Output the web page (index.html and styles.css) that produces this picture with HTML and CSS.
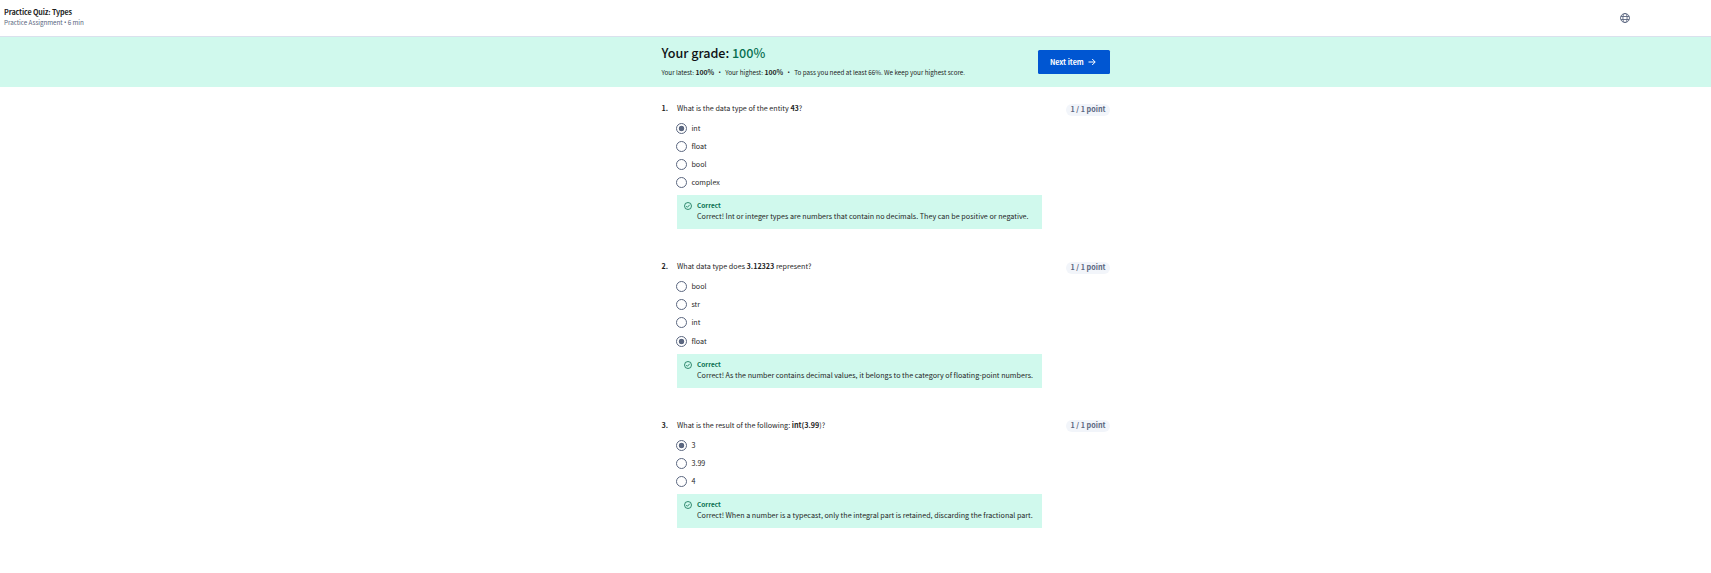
FILE: index.html
```html
<!DOCTYPE html>
<html lang="en">
<head>
<meta charset="utf-8">
<title>Practice Quiz: Types</title>
<link rel="stylesheet" href="styles.css">
</head>
<body>
<svg class="defs" aria-hidden="true">
  <symbol id="check" viewBox="0 0 8 8"><g fill="none" stroke="currentColor" stroke-width=".8"><circle cx="4" cy="4" r="3.5"/><path d="M2.2 4.1l1.2 1.2 2.3-2.5"/></g></symbol>
</svg>
<header class="topbar">
  <div>
    <h1 class="title">Practice Quiz: Types</h1>
    <p class="subtitle">Practice Assignment <span class="bullet">•</span> 6 min</p>
  </div>
  <svg class="globe" viewBox="0 0 10 10" fill="none" stroke="currentColor" stroke-width=".9"><circle cx="5" cy="5" r="4.5"/><ellipse cx="5" cy="5" rx="2.1" ry="4.5"/><path d="M.9 3.5h8.2M.9 6.5h8.2"/></svg>
</header>
<section class="banner">
  <div class="banner-inner">
    <div>
      <h2 class="grade">Your grade: <span class="score">100%</span></h2>
      <p class="summary">Your latest: <b>100%</b><span class="bullet dot">•</span>Your highest: <b>100%</b><span class="bullet dot">•</span>To pass you need at least 66%. We keep your highest score.</p>
    </div>
    <button class="next"><span>Next item</span><svg class="arrow" viewBox="0 0 8 8" fill="none" stroke="currentColor" stroke-width="1"><path d="M.5 4h6.6M4.2 1l3 3-3 3"/></svg></button>
  </div>
</section>
<main class="quiz">
  <section class="question">
    <span class="num">1.</span>
    <div class="body">
      <p class="prompt">What is the data type of the entity <b>43</b>?</p>
      <ul class="options">
        <li class="option"><span class="radio on"></span>int</li>
        <li class="option"><span class="radio"></span>float</li>
        <li class="option"><span class="radio"></span>bool</li>
        <li class="option"><span class="radio"></span>complex</li>
      </ul>
      <div class="feedback"><svg class="check"><use href="#check"/></svg><div><p class="verdict">Correct</p><p class="note">Correct! Int or integer types are numbers that contain no decimals. They can be positive or negative.</p></div></div>
    </div>
    <span class="points">1 / 1 point</span>
  </section>
  <section class="question second">
    <span class="num">2.</span>
    <div class="body">
      <p class="prompt">What data type does <b>3.12323</b> represent?</p>
      <ul class="options">
        <li class="option"><span class="radio"></span>bool</li>
        <li class="option"><span class="radio"></span>str</li>
        <li class="option"><span class="radio"></span>int</li>
        <li class="option last"><span class="radio on"></span>float</li>
      </ul>
      <div class="feedback"><svg class="check"><use href="#check"/></svg><div><p class="verdict">Correct</p><p class="note">Correct! As the number contains decimal values, it belongs to the category of floating-point numbers.</p></div></div>
    </div>
    <span class="points">1 / 1 point</span>
  </section>
  <section class="question third">
    <span class="num">3.</span>
    <div class="body">
      <p class="prompt">What is the result of the following: <b>int(3.99</b>)?</p>
      <ul class="options">
        <li class="option"><span class="radio on"></span>3</li>
        <li class="option"><span class="radio"></span>3.99</li>
        <li class="option"><span class="radio"></span>4</li>
      </ul>
      <div class="feedback"><svg class="check"><use href="#check"/></svg><div><p class="verdict">Correct</p><p class="note">Correct! When a number is a typecast, only the integral part is retained, discarding the fractional part.</p></div></div>
    </div>
    <span class="points">1 / 1 point</span>
  </section>
</main>
</body>
</html>
```
FILE: styles.css
```css
* { box-sizing: border-box; margin: 0; padding: 0; }
body {
  background: #fff;
  color: #1f1f1f;
  font-family: "Noto Sans CJK SC", "Open Sans", sans-serif;
  font-size: 7.2px;
  line-height: 10px;
}
ul { list-style: none; }
.defs { position: absolute; width: 0; height: 0; }
.topbar {
  display: flex;
  justify-content: space-between;
  align-items: flex-start;
  height: 37px;
  padding: 7px 81px 0 4px;
  border-bottom: 1px solid #dae1ed;
}
.title { font-size: 7.2px; line-height: 11px; font-weight: 700; letter-spacing: -.15px; }
.subtitle { font-size: 6.3px; line-height: 9px; color: #5b6780; letter-spacing: -.05px; }
.bullet { font-family: "Open Sans", sans-serif; line-height: 1; }
.globe { width: 10px; height: 10px; margin-top: 6px; color: #5b6780; }
.banner { height: 50px; background: #d0f9ed; }
.banner-inner {
  display: flex;
  justify-content: space-between;
  width: 448.5px;
  margin-left: 661.5px;
  padding-top: 6px;
}
.grade { font-size: 12.6px; line-height: 19px; font-weight: 500; color: #0f1114; letter-spacing: -.03px; }
.score { color: #087051; }
.summary { margin-top: 5px; font-size: 6.3px; line-height: 12px; white-space: nowrap; letter-spacing: -.01px; }
.summary b { font-size: 6.9px; line-height: 1; }
.dot { display: inline-block; width: 11px; text-align: center; }
.next {
  display: flex;
  align-items: center;
  gap: 4.5px;
  width: 72px;
  height: 24px;
  margin-top: 7px;
  padding-left: 12px;
  border: 0;
  border-radius: 1.5px;
  background: #0056d2;
  color: #fff;
  font: 700 7.2px/12px "Noto Sans CJK SC", "Open Sans", sans-serif;
  letter-spacing: -.05px;
  white-space: nowrap;
}
.arrow { width: 8px; height: 8px; }
.quiz { width: 448.5px; margin-left: 661.5px; padding-top: 17px; }
.question { display: grid; grid-template-columns: 15.5px 365px 1fr; height: 158px; }
.second { height: 159px; }
.num { line-height: 9px; font-weight: 700; }
.prompt { line-height: 9px; white-space: nowrap; letter-spacing: -.01px; }
.options { padding-top: 6px; }
.option { display: flex; align-items: center; gap: 4.4px; height: 18px; }
.option.last { height: 20px; margin-bottom: -1px; }
.radio { width: 11px; height: 11px; margin: 1px 0 0 -1px; border: 1px solid #5b6780; border-radius: 50%; }
.on { background: radial-gradient(circle, #5b6780 2.5px, transparent 3.1px); }
.feedback {
  display: flex;
  gap: 5px;
  height: 34px;
  margin-top: 4px;
  padding: 5px 7px 0;
  background: #d0f9ed;
}
.check { width: 8px; height: 8px; margin-top: 2px; color: #087051; }
.verdict { font-size: 6.5px; line-height: 11px; font-weight: 700; color: #087051; }
.note { line-height: 11px; white-space: nowrap; letter-spacing: -.01px; }
.points {
  justify-self: end;
  width: 44px;
  height: 12px;
  border-radius: 6px;
  background: #f2f5fa;
  color: #5b6780;
  font-size: 7.2px;
  font-weight: 700;
  line-height: 11px;
  text-align: center;
}
.third .points { margin-top: -1px; }
```
